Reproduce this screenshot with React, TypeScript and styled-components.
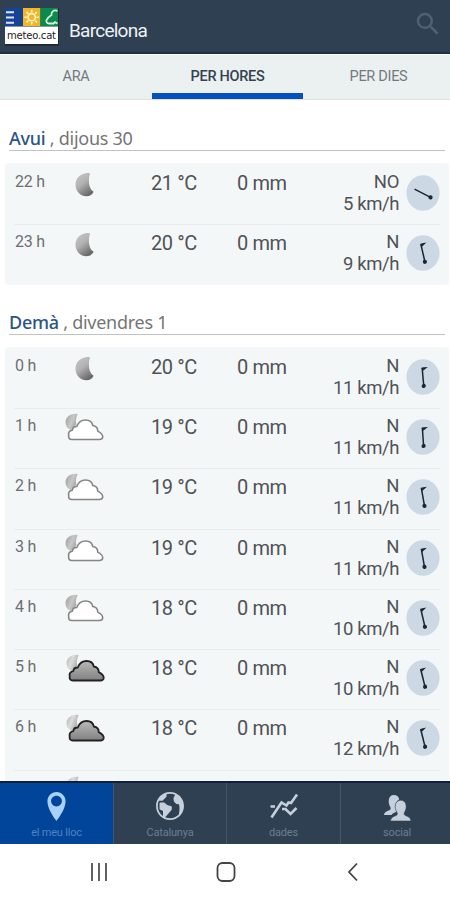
import React from 'react';
import styled, { createGlobalStyle } from 'styled-components';
import { MdSearch } from 'react-icons/md';
import { ImEarth, ImLocation } from 'react-icons/im';

type Sky = 'moon' | 'cloud' | 'darkCloud';

interface Hour {
  hour: string;
  sky: Sky;
  temp: string;
  rain: string;
  dir: string;
  wind: string;
  angle: number;
}

interface Day {
  name: string;
  date: string;
  hours: Hour[];
  next?: Sky;
}

const days: Day[] = [
  {
    name: 'Avui',
    date: 'dijous 30',
    hours: [
      { hour: '22 h', sky: 'moon', temp: '21 °C', rain: '0 mm', dir: 'NO', wind: '5 km/h', angle: -63 },
      { hour: '23 h', sky: 'moon', temp: '20 °C', rain: '0 mm', dir: 'N', wind: '9 km/h', angle: -13 },
    ],
  },
  {
    name: 'Demà',
    date: 'divendres 1',
    hours: [
      { hour: '0 h', sky: 'moon', temp: '20 °C', rain: '0 mm', dir: 'N', wind: '11 km/h', angle: -5 },
      { hour: '1 h', sky: 'cloud', temp: '19 °C', rain: '0 mm', dir: 'N', wind: '11 km/h', angle: -4 },
      { hour: '2 h', sky: 'cloud', temp: '19 °C', rain: '0 mm', dir: 'N', wind: '11 km/h', angle: -10 },
      { hour: '3 h', sky: 'cloud', temp: '19 °C', rain: '0 mm', dir: 'N', wind: '11 km/h', angle: -10 },
      { hour: '4 h', sky: 'cloud', temp: '18 °C', rain: '0 mm', dir: 'N', wind: '10 km/h', angle: -13 },
      { hour: '5 h', sky: 'darkCloud', temp: '18 °C', rain: '0 mm', dir: 'N', wind: '10 km/h', angle: -14 },
      { hour: '6 h', sky: 'darkCloud', temp: '18 °C', rain: '0 mm', dir: 'N', wind: '12 km/h', angle: -14 },
    ],
    next: 'darkCloud',
  },
];

const Logo = () => (
  <svg width="54" height="38" viewBox="0 0 54 38">
    <rect width="54" height="38" fill="#1d2b3a" />
    <rect width="18" height="18" fill="#164396" />
    <rect x="18" width="17.5" height="18" fill="#f2b62c" />
    <rect x="35.5" width="17.5" height="18" fill="#0c8a4c" />
    <path d="M1 4.3h8M1 9.5h8M1 14.7h8" stroke="#dce8fa" strokeWidth="1.9" />
    <g stroke="#fff4c4" strokeWidth="1.6" fill="none">
      <circle cx="26.7" cy="9.2" r="3.6" />
      <path d="M26.7 1.8v2.7M26.7 13.9v2.7M19.3 9.2H22M31.4 9.2h2.7M21.5 4l1.9 1.9M30 12.5l1.9 1.9M31.9 4L30 5.9M23.4 12.5l-1.9 1.9" />
    </g>
    <path
      d="M52.5 3C49 1.500 46 3.500 46.500 7c-1.500 1-4 2.500-5 5-.5 2 .5 3.500 2.500 3.500h4.500l1.500-1.300 2.500 1.300"
      stroke="#d4f3dd"
      strokeWidth="1.8"
      fill="none"
    />
    <rect y="18.5" width="53" height="17.5" fill="#fff" />
    <text x="2" y="30.5" fontSize="10" textLength="49" fontFamily="'DejaVu Sans', sans-serif" fill="#222">
      meteo.cat
    </text>
  </svg>
);

const SkyIcon = ({ sky }: { sky: Sky }) => {
  if (sky === 'moon') {
    return (
      <svg width="42" height="34" viewBox="0 0 42 34">
        <defs>
          <linearGradient id="moon" x1="0" y1="0" x2="0.6" y2="1">
            <stop offset="0" stopColor="#c8c8c8" />
            <stop offset="0.5" stopColor="#b2b2b2" />
            <stop offset="1" stopColor="#6a6a6a" />
          </linearGradient>
        </defs>
        <path
          d="M27 5.200C19 4 12.500 9.500 12.500 16.500c0 7.300 5.300 11.700 10.700 11.700 3.500 0 6-1.500 7.500-4.500C26.500 21.500 24.500 14 27 5.200Z"
          fill="url(#moon)"
        />
      </svg>
    );
  }
  const dark = sky === 'darkCloud';
  return (
    <svg width="42" height="34" viewBox="0 0 42 34">
      <defs>
        <linearGradient id="smallMoon" x1="0" y1="0" x2="1" y2="0.5">
          <stop offset="0" stopColor="#9c9c9c" />
          <stop offset="0.6" stopColor="#c8c8c8" />
          <stop offset="1" stopColor="#a4a4a4" />
        </linearGradient>
        <linearGradient id="smallMoonLight" x1="0" y1="0" x2="1" y2="0.5">
          <stop offset="0" stopColor="#b4b4b4" />
          <stop offset="0.5" stopColor="#dcdcdc" />
          <stop offset="1" stopColor="#aaa" />
        </linearGradient>
        <linearGradient id="darkCloud" x1="0" y1="0" x2="0" y2="1">
          <stop offset="0" stopColor="#b9b9b9" />
          <stop offset="1" stopColor="#818181" />
        </linearGradient>
      </defs>
      <g transform={dark ? 'translate(1.5 0)' : 'translate(0.5 0)'}>
        <path
          d="M14.200 1.900C7.200.6 2 5 2 10.200c0 3.700 2 6.500 5 7.600l6-5c-1-3-.8-6.600 1.200-10.900Z"
          fill={dark ? 'url(#smallMoonLight)' : 'url(#smallMoon)'}
        />
        <path
          d="M8.500 27.500C5.500 27.500 4.800 25.500 5.200 23.500c-.7-2.500.6-5 3.600-5.400.3-2.500 1.700-3.700 4.500-3.600 1.500-4 4.700-6.500 8.800-6.500 4.100 0 6.600 2.400 7.200 5.500 3.500.6 5 2.500 4.900 5.600 2.700 1.300 5.200 4 5 6.100-.2 1.600-1.700 2.300-3.400 2.300Z"
          fill={dark ? 'url(#darkCloud)' : '#fff'}
          stroke={dark ? '#222' : '#858585'}
          strokeWidth={dark ? 1.8 : 1.6}
          strokeLinejoin="round"
        />
      </g>
    </svg>
  );
};

const WindArrow = ({ angle }: { angle: number }) => (
  <svg width="34" height="36" viewBox="0 0 34 36">
    <ellipse cx="17" cy="18" rx="16.6" ry="17.8" fill="#cdd8e5" />
    <g transform={`translate(17 18.5) rotate(${angle})`} stroke="#1d2632" fill="#1d2632">
      <path d="M0 8.5V-9.5" strokeWidth="1.5" />
      {angle > -60 && <path d="M-.5-9.500h4.500l-4 2.500" strokeWidth="1" />}
      <circle cy="8.5" r="2.1" stroke="none" />
    </g>
  </svg>
);

const ChartIcon = () => (
  <svg width="30" height="30" viewBox="0 0 30 30" fill="none" stroke="#c5d0dc" strokeWidth="2.6">
    <path d="M2.500 25.500L12.500 10.500 17.500 13.500 19.500 10.500 22 11 28 2.500" />
    <path d="M1.500 14.500h4.500M13 17h3.500l5 5 6-6" />
  </svg>
);

const PeopleIcon = () => (
  <svg width="30" height="30" viewBox="0 0 30 30" fill="#c5d0dc">
    <path d="M2 23c.2-2.800 2.200-3.600 5.800-5 1-.4 1-2 .5-3-2.700-4.500-2.100-12 3.500-12 3.300 0 5 1.700 5.400 4.500-3.500 1.500-4.500 6-2.700 10.300.4 1.200.2 2-1 2.500-1.900.8-3.300 1.400-4 2.700Z" />
    <path
      d="M8.500 29c.2-3.200 2.300-4.200 5.600-5.500 1.300-.5 1.500-2 .8-3.300-3-4.600-2.100-12 3.800-12s6.800 7.400 3.900 12c-.8 1.300-.5 2.800.8 3.300 3.300 1.300 5.400 2.300 5.600 5.500Z"
      stroke="#2f4053"
      strokeWidth="0.6"
    />
  </svg>
);

const App = () => (
  <>
    <GlobalStyle />
    <Screen>
      <Header>
        <Logo />
        <City>Barcelona</City>
        <MdSearch size={30} color="#4f6173" />
      </Header>
      <Tabs>
        <Tab>ARA</Tab>
        <Tab $active>PER HORES</Tab>
        <Tab>PER DIES</Tab>
      </Tabs>
      <Content>
        {days.map((day) => (
          <DaySection key={day.name}>
            <DayTitle>
              <strong>{day.name}</strong> , {day.date}
            </DayTitle>
            <Card>
              {day.hours.map((h) => (
                <Row key={h.hour}>
                  <HourText>{h.hour}</HourText>
                  <SkyIcon sky={h.sky} />
                  <Temp>{h.temp}</Temp>
                  <Rain>{h.rain}</Rain>
                  <Wind>
                    <span>{h.dir}</span>
                    <span>{h.wind}</span>
                  </Wind>
                  <WindArrow angle={h.angle} />
                </Row>
              ))}
              {day.next && (
                <NextRow>
                  <SkyIcon sky={day.next} />
                </NextRow>
              )}
            </Card>
          </DaySection>
        ))}
      </Content>
      <BottomNav>
        <NavItem $active>
          <ImLocation size={29} />
          <span>el meu lloc</span>
        </NavItem>
        <NavItem>
          <ImEarth size={28} />
          <span>Catalunya</span>
        </NavItem>
        <NavItem>
          <ChartIcon />
          <span>dades</span>
        </NavItem>
        <NavItem>
          <PeopleIcon />
          <span>social</span>
        </NavItem>
      </BottomNav>
      <SystemBar>
        <svg width="20" height="20" viewBox="0 0 20 20" stroke="#505050" strokeWidth="1.8">
          <path d="M3 1v18M10 1v18M17 1v18" />
        </svg>
        <svg width="20" height="20" viewBox="0 0 20 20" stroke="#444" strokeWidth="1.8" fill="none">
          <rect x="1.5" y="1" width="17" height="18" rx="5" />
        </svg>
        <svg width="20" height="20" viewBox="0 0 20 20" stroke="#444" strokeWidth="1.8" fill="none">
          <path d="M14 1.5L6 10l8 8.5" />
        </svg>
      </SystemBar>
    </Screen>
  </>
);

export default App;

const GlobalStyle = createGlobalStyle`
  * {
    box-sizing: border-box;
  }
  body {
    margin: 0;
    background: #fff;
    font-family: Roboto, sans-serif;
  }
  svg {
    display: block;
    flex-shrink: 0;
  }
`;

const Screen = styled('div')`
  width: 450px;
  height: 900px;
  display: flex;
  flex-direction: column;
  overflow: hidden;
`;

const Header = styled('header')`
  height: 54px;
  flex-shrink: 0;
  display: flex;
  align-items: flex-start;
  padding: 8px 7px 0 5px;
  background-color: #2f4053;
  border-bottom: 2px solid #1c3145;
  > svg:last-child {
    margin-top: 1px;
  }
`;

const City = styled('h1')`
  flex: 1;
  margin: 10px 0 0 10px;
  color: #eef2f5;
  font-size: 19px;
  line-height: 26px;
  font-weight: 400;
  letter-spacing: -0.75px;
`;

const Tabs = styled('nav')`
  height: 46px;
  flex-shrink: 0;
  display: grid;
  grid-template-columns: 152px 151px 147px;
  background-color: #ebf0f1;
  border-top: 1px solid #fbfcfc;
  border-bottom: 1px solid #dde1e2;
`;

const Tab = styled('div')<{ $active?: boolean }>`
  display: flex;
  justify-content: center;
  padding-top: 13px;
  line-height: 18px;
  font-size: 14.5px;
  letter-spacing: -0.3px;
  font-weight: ${(props) => (props.$active ? 500 : 400)};
  color: ${(props) => (props.$active ? '#35414f' : '#74797e')};
  border-bottom: ${(props) => (props.$active ? '6px solid #0450c4' : 'none')};
  &:last-child {
    padding-left: 4px;
  }
`;

const Content = styled('main')`
  flex: 1;
  min-height: 0;
  overflow: hidden;
  padding: 0 1px 0 5px;
`;

const DaySection = styled('section')`
  padding-top: 24px;
  & + & {
    padding-top: 23px;
  }
`;

const DayTitle = styled('h2')`
  margin: 0 4px 12px 4px;
  height: 27px;
  border-bottom: 1px solid #bfc3c6;
  font-family: 'Noto Sans', sans-serif;
  font-size: 18px;
  line-height: 28px;
  font-weight: 400;
  letter-spacing: -0.27px;
  color: #757575;
  strong {
    font-weight: 500;
    color: #2b5584;
  }
`;

const Card = styled('div')`
  padding: 2px 9px 0;
  border-radius: 4px;
  background-color: #f4f7f7;
`;

const Row = styled('div')`
  height: 60.25px;
  display: grid;
  grid-template-columns: 49px 83px 84px 94px 75px 34px;
  align-items: start;
  border-bottom: 1px solid #e9ecec;
  color: #505357;
  &:last-child {
    height: 59.5px;
    border-bottom: none;
  }
  > svg:last-child {
    margin: 10px 0 0 7px;
  }
  > svg:nth-child(2) {
    margin-top: 3px;
  }
`;

const NextRow = styled('div')`
  height: 60.25px;
  padding: 4px 0 0 49px;
`;

const HourText = styled('span')`
  padding-left: 1px;
  margin-top: 7px;
  font-size: 16px;
  line-height: 20px;
  letter-spacing: -0.2px;
  color: #6c6f73;
`;

const Temp = styled('span')`
  padding-left: 5px;
  margin-top: 6px;
  font-size: 20px;
  line-height: 24px;
  letter-spacing: -0.4px;
`;

const Rain = styled(Temp)`
  padding-left: 7px;
`;

const Wind = styled('div')`
  display: flex;
  flex-direction: column;
  align-items: flex-end;
  margin-top: 6px;
  font-size: 18.5px;
  line-height: 22px;
  letter-spacing: -0.4px;
  white-space: nowrap;
`;

const BottomNav = styled('nav')`
  height: 63px;
  flex-shrink: 0;
  display: grid;
  grid-template-columns: 114px 113px 114px 109px;
  background-color: #2f4053;
  border-top: 2px solid #101f40;
`;

const NavItem = styled('div')<{ $active?: boolean }>`
  display: flex;
  flex-direction: column;
  align-items: center;
  justify-content: space-between;
  padding: 9px 0 4px;
  border-right: 1px solid #43566a;
  background-color: ${(props) => (props.$active ? '#01459b' : 'transparent')};
  color: ${(props) => (props.$active ? '#a9d1ff' : '#c5d0dc')};
  &:last-child {
    border-right: none;
    padding-left: 3px;
  }
  span {
    font-size: 11px;
    line-height: 14px;
    letter-spacing: -0.2px;
    color: ${(props) => (props.$active ? '#4e82be' : '#6c7e90')};
  }
`;

const SystemBar = styled('footer')`
  height: 56px;
  flex-shrink: 0;
  display: flex;
  justify-content: space-between;
  align-items: center;
  padding: 0 87px 0 89px;
  background-color: #fff;
`;
